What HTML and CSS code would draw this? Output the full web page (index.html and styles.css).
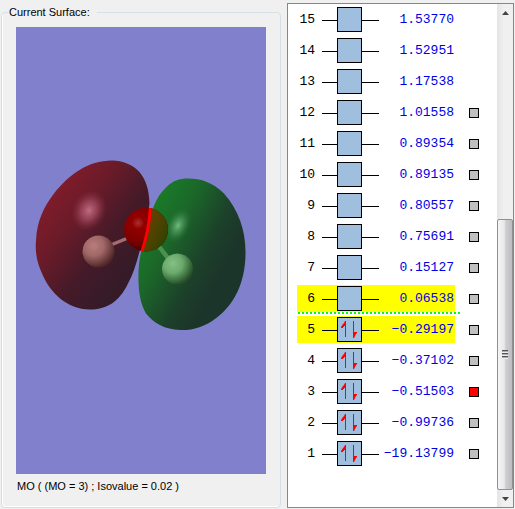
FILE: index.html
```html
<!doctype html>
<html lang="en">
<head>
  <meta charset="UTF-8">
  <meta name="viewport" content="width=device-width, initial-scale=1.0">
  <title>Molecular Orbitals</title>
  <link rel="stylesheet" href="styles.css">
</head>
<body>
  <fieldset class="surface">
    <legend>Current Surface:</legend>
    <div class="viewer">
      <svg class="molecule" viewBox="16 27 250 446" role="img" aria-label="Orbital surface">
        <defs>
          <linearGradient id="redLobe" x1="0.15" y1="0.1" x2="0.8" y2="0.75">
            <stop offset="0" stop-color="#861c2a"/>
            <stop offset="0.35" stop-color="#6c1b29"/>
            <stop offset="0.7" stop-color="#451a28"/>
            <stop offset="1" stop-color="#351b28"/>
          </linearGradient>
          <linearGradient id="greenLobe" x1="0.15" y1="0.1" x2="0.8" y2="0.6">
            <stop offset="0" stop-color="#1a7d27"/>
            <stop offset="0.35" stop-color="#1b6829"/>
            <stop offset="0.75" stop-color="#1c402a"/>
            <stop offset="1" stop-color="#1c352a"/>
          </linearGradient>
          <radialGradient id="redShine">
            <stop offset="0" stop-color="#bd6d83"/>
            <stop offset="0.45" stop-color="#a95066" stop-opacity="0.7"/>
            <stop offset="1" stop-color="#8a3044" stop-opacity="0"/>
          </radialGradient>
          <radialGradient id="greenShine">
            <stop offset="0" stop-color="#72b982"/>
            <stop offset="0.45" stop-color="#479357" stop-opacity="0.7"/>
            <stop offset="1" stop-color="#256b32" stop-opacity="0"/>
          </radialGradient>
          <radialGradient id="oxygen" cx="0.32" cy="0.35" r="0.7">
            <stop offset="0" stop-color="#a83030"/>
            <stop offset="0.2" stop-color="#920000"/>
            <stop offset="0.6" stop-color="#7d0000"/>
            <stop offset="1" stop-color="#3c0000"/>
          </radialGradient>
          <linearGradient id="oxygenTinted" x1="0" y1="0" x2="1" y2="0.8">
            <stop offset="0" stop-color="#7b3900"/>
            <stop offset="0.5" stop-color="#534200"/>
            <stop offset="1" stop-color="#264300"/>
          </linearGradient>
          <radialGradient id="pinkAtom" cx="0.35" cy="0.32" r="0.7">
            <stop offset="0" stop-color="#b87c7c"/>
            <stop offset="0.45" stop-color="#a16868"/>
            <stop offset="0.8" stop-color="#6c3c3c"/>
            <stop offset="1" stop-color="#4b2528"/>
          </radialGradient>
          <radialGradient id="greenAtom" cx="0.35" cy="0.32" r="0.7">
            <stop offset="0" stop-color="#82c085"/>
            <stop offset="0.45" stop-color="#6ba96c"/>
            <stop offset="0.8" stop-color="#3b6e3c"/>
            <stop offset="1" stop-color="#254a28"/>
          </radialGradient>
          <clipPath id="oxygenClip">
            <circle cx="146" cy="229" r="22"/>
          </clipPath>
        </defs>

        <!-- lobes -->
        <path fill="url(#redLobe)" d="M112 160C123 160 132 164 139 171C145 178 149 187 149.500 203C147 220 143 239 139 253C136 264 133 274 128 283C119 302 106 309 90 309C67 309 50 292 42 273C37 262 35 252 36 240C37 220 44 206 54 193C69 174 88 160 112 160Z"/>
        <path fill="url(#greenLobe)" d="M188 178C201 178 213 182 224 193C239 210 246 231 245.500 254C245 283 234 304 217 317C204 327 192 330 180 329.500C165 329 154 323 146 313C140 303 138 289 138.500 272C139 254 143 244 148 228C152 206 157 196 166 187C173 180 179 178 188 178Z"/>
        <ellipse fill="url(#redShine)" cx="89" cy="210" rx="17" ry="21" transform="rotate(25 89 210)"/>
        <ellipse fill="url(#greenShine)" cx="178" cy="225" rx="12" ry="19" transform="rotate(25 178 225)"/>

        <!-- bonds -->
        <path stroke="#a66b70" stroke-width="3.500" d="M112 244L128 237.500"/>
        <path stroke="#4b914e" stroke-width="4.500" d="M159 246L169 259"/>

        <!-- atoms -->
        <circle cx="146" cy="229" r="22" fill="url(#oxygen)"/>
        <g clip-path="url(#oxygenClip)">
          <path fill="url(#oxygenTinted)" d="M152 206C150 222 147 238 142 252H170V206Z"/>
          <path fill="#fe0000" d="M149 206H152C151 222 148 238 143 252H140C145 238 148 222 149 206Z"/>
        </g>
        <circle cx="98.500" cy="251" r="16" fill="url(#pinkAtom)"/>
        <circle cx="177.500" cy="268.500" r="15.500" fill="url(#greenAtom)"/>
      </svg>
    </div>
    <p class="caption">MO ( (MO = 3) ; Isovalue = 0.02 )</p>
  </fieldset>

  <section class="orbitals">
    <table class="levels" aria-label="Orbital energies">
      <tbody id="levels"></tbody>
    </table>
    <div class="scrollbar">
      <button type="button" class="arrow" aria-label="Scroll up">
        <svg width="7" height="4"><path d="M0 4L3.500 0L7 4Z"/></svg>
      </button>
      <div class="track"></div>
      <div class="thumb"><span class="grip"></span></div>
      <button type="button" class="arrow" aria-label="Scroll down">
        <svg width="7" height="4"><path d="M0 0L3.500 4L7 0Z"/></svg>
      </button>
    </div>
  </section>
  <script src="orbitals.js"></script>
</body>
</html>
```
FILE: styles.css
```css
* {
  box-sizing: border-box;
}
body {
  margin: 0;
  padding: 3px 1px 1px;
  height: 100vh;
  min-height: 480px;
  display: grid;
  grid-template-columns: minmax(0, 280fr) minmax(0, 227fr);
  gap: 6px;
  background-color: #f0f0f0;
  color: #000;
  font-family: "Liberation Sans", Arial, sans-serif;
  font-size: 11px;
}
.surface {
  min-width: 0;
  margin: 2px 0 0;
  padding: 8px 14px 14px;
  display: flex;
  flex-direction: column;
  border: 1px solid #d5dfe5;
  border-radius: 4px;
  box-shadow: inset 1px -1px 0 #fff;
}
.surface legend {
  margin-left: -8px;
  padding: 0 7px 0 1px;
  line-height: 14px;
}
.viewer {
  flex: 1 1 0;
  min-height: 0;
  background-color: #8080cc;
}
.molecule {
  display: block;
  width: 100%;
  height: 100%;
}
.caption {
  margin: 5px 0 0;
  padding-left: 1px;
  line-height: 14px;
  white-space: nowrap;
}
.orbitals {
  display: flex;
  justify-content: space-between;
  border: 1px solid #828790;
  background-color: #fff;
}
.levels {
  align-self: flex-start;
  margin-left: 9px;
  border-spacing: 0;
  font-family: "Liberation Mono", monospace;
  font-size: 13px;
}
.levels tr {
  height: 31px;
}
.levels th,
.levels td {
  padding: 2px 0;
  height: 31px;
  line-height: 27px;
  font-weight: normal;
  text-align: right;
  background-clip: content-box;
}
.levels .number {
  width: 25px;
}
.levels .number span {
  margin-right: 7px;
}
.levels .diagram svg {
  display: block;
  margin: 1px 0;
}
.levels .energy {
  width: 76px;
  color: #0000e6;
}
.levels .energy span {
  margin-right: 1px;
}
.levels .pick {
  padding-left: 14px;
}
.levels .frontier .number,
.levels .frontier .diagram,
.levels .frontier .energy {
  background-color: #ff0;
}
/* line between empty and filled orbitals */
.levels .lumo {
  background: repeating-linear-gradient(to right, #0f0 0 2px, transparent 2px 4px) 1px 100% / 162px 2px no-repeat;
}
.pick input {
  display: block;
  appearance: none;
  width: 10px;
  height: 10px;
  margin: 0;
  border: 1px solid #000;
  background-color: #c0c0c0;
}
.pick input:checked {
  background-color: #f00;
}
.box {
  fill: #a0bfdf;
  stroke: #000;
}
.line {
  fill: #000;
}
.spin {
  fill: #f00;
}
.scrollbar {
  width: 16px;
  display: flex;
  flex-direction: column;
  background: linear-gradient(to right, #e4e4e6, #f0f0f0 40%);
}
.arrow {
  height: 17px;
  padding: 0;
  display: flex;
  align-items: center;
  justify-content: center;
  border: none;
  background: none;
}
.arrow svg {
  fill: #444;
}
.track {
  flex: 198;
}
.thumb {
  flex: 270;
  display: flex;
  align-items: center;
  justify-content: center;
  border: 1px solid #8e9094;
  border-radius: 2px;
  background: linear-gradient(to right, #f5f5f5, #e8e8ea 45%, #cfcfd2 55%, #bdbdc1);
}
.grip {
  width: 6px;
  height: 9px;
  background: repeating-linear-gradient(#555 0 1px, #aaa 1px 2px, #eee 2px 3px);
}
```
FILE: orbitals.js
```js
const SELECTED = 3;
const OCCUPIED = 5;
const energies = [
  '-19.13799', '-0.99736', '-0.51503', '-0.37102', '-0.29197',
  '0.06538', '0.15127', '0.75691', '0.80557', '0.89135',
  '0.89354', '1.01558', '1.17538', '1.52951', '1.53770'
];

const spins = `
  <path class="spin" d="M23 4h1v16h-1v-11h-1v1h-1v1h-2v-1l2-3l1-1z"/>
  <path class="spin" d="M31 4h1v11h3v1l-1 1l-1 2l-1 2h-1z"/>`;

function renderLevel(number) {
  const classes = [];
  if (number === OCCUPIED || number === OCCUPIED + 1) classes.push('frontier');
  if (number === OCCUPIED + 1) classes.push('lumo');
  const pick = number > 12 ? '' : `<input type="checkbox" aria-label="Orbital ${number}" ${number === SELECTED ? 'checked' : ''}>`;

  return `
    <tr class="${classes.join(' ')}">
      <th scope="row" class="number"><span>${number}</span></th>
      <td class="diagram">
        <svg width="57" height="25">
          <rect class="line" y="13" width="57" height="1"/>
          <rect class="box" x="15.5" y="0.5" width="24" height="24"/>
          ${number <= OCCUPIED ? spins : ''}
        </svg>
      </td>
      <td class="energy"><span>${energies[number - 1].replace('-', '\u2212')}</span></td>
      <td class="pick">${pick}</td>
    </tr>`;
}

let rows = '';
for (let n = energies.length; n > 0; n--) {
  rows += renderLevel(n);
}
document.getElementById('levels').innerHTML = rows;
```
